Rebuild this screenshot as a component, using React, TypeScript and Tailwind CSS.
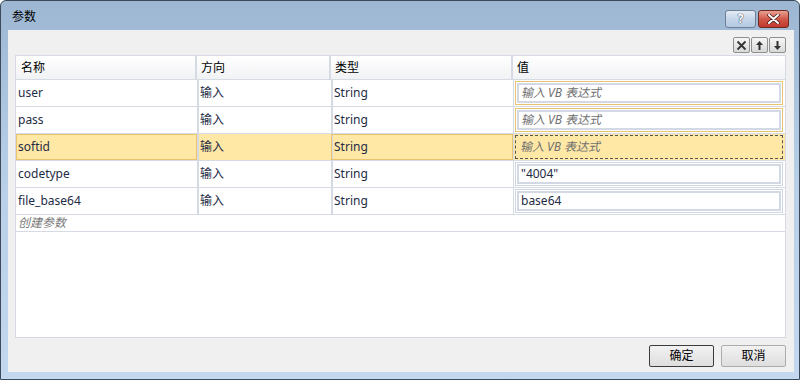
import React from "react";

type Param = { name: string; dir: string; type: string; value: string; placeholder?: boolean };

const params: Param[] = [
	{ name: "user", dir: "输入", type: "String", value: "输入 VB 表达式", placeholder: true },
	{ name: "pass", dir: "输入", type: "String", value: "输入 VB 表达式", placeholder: true },
	{ name: "softid", dir: "输入", type: "String", value: "输入 VB 表达式", placeholder: true },
	{ name: "codetype", dir: "输入", type: "String", value: "\"4004\"" },
	{ name: "file_base64", dir: "输入", type: "String", value: "base64" },
];

const font = { fontFamily: '"Noto Sans", "Noto Sans CJK SC", sans-serif' };

function ToolButton({ children }: { children: React.ReactNode }) {
	return (
		<div className="w-[17px] h-[16px] flex items-center justify-center rounded-[2px] border border-[#8e8f8f] bg-gradient-to-b from-[#f6f6f6] to-[#d9d9d9] text-[#222]">
			{children}
		</div>
	);
}

export default function App() {
	return (
		<div className="w-[800px] h-[380px] overflow-hidden" style={font}>
			<div className="w-[800px] h-[380px] flex flex-col rounded-t-[6px] border border-[#3c4a5c] bg-gradient-to-b from-[#9db7d3] via-[#b9d0e8] to-[#c3d8ee]">
				{/* title bar */}
				<div className="h-[29px] flex items-start">
					<span className="mt-[8px] ml-[11px] text-[12px] leading-[16px] text-black">参数</span>
					<div className="ml-auto mt-[9px] mr-[10px] flex gap-[2px]">
						<div className="w-[31px] h-[18px] rounded-[3px] border border-[#6e7f96] bg-gradient-to-b from-[#e4ecf6] via-[#c6d6ea] to-[#b3c8e2] flex items-center justify-center text-[12px] font-bold text-white [text-shadow:0_0_1px_#334,0_0_1px_#334]">
							?
						</div>
						<div className="w-[31px] h-[18px] rounded-[3px] border border-[#6b2a24] bg-gradient-to-b from-[#e8a193] via-[#d0574a] to-[#c0392b] flex items-center justify-center">
							<svg width="13" height="10" viewBox="0 0 13 10">
								<path d="M2 1 L11 9 M11 1 L2 9" stroke="#3a1a16" strokeWidth="3.4" strokeLinecap="round" />
								<path d="M2 1 L11 9 M11 1 L2 9" stroke="#fff" strokeWidth="2" strokeLinecap="round" />
							</svg>
						</div>
					</div>
				</div>

				{/* client area */}
				<div className="ml-[7px] mr-[5px] h-[342px] bg-[#f0f0f0] flex flex-col pl-[7px] pr-[8px]">
					<div className="h-[25px] flex items-start justify-end pt-[7px]">
						<div className="flex gap-[1px]">
							<ToolButton>
								<svg width="11" height="11" viewBox="0 0 11 11">
									<path d="M1.5 1.5 L9.5 9.5 M9.5 1.5 L1.5 9.5" stroke="#333" strokeWidth="1.8" />
								</svg>
							</ToolButton>
							<ToolButton>
								<svg width="9" height="11" viewBox="0 0 9 11">
									<path d="M4.5 1 L8 5 H5.5 V10 H3.5 V5 H1 Z" fill="#333" />
								</svg>
							</ToolButton>
							<ToolButton>
								<svg width="9" height="11" viewBox="0 0 9 11">
									<path d="M4.5 10 L8 6 H5.5 V1 H3.5 V6 H1 Z" fill="#333" />
								</svg>
							</ToolButton>
						</div>
					</div>

					{/* grid */}
					<div className="h-[283px] border border-[#d5dae3] bg-white flex flex-col text-[12px] leading-[16px]">
						<div className="h-[24px] flex bg-gradient-to-b from-white to-[#f1f2f4] border-b border-[#d5dae3] text-black">
							<div className="w-[181px] border-r-2 border-[#d5dae3] pl-[5px] pt-[4px]">名称</div>
							<div className="w-[134px] border-r-2 border-[#d5dae3] pl-[4px] pt-[4px]">方向</div>
							<div className="w-[182px] border-r-2 border-[#d5dae3] pl-[4px] pt-[4px]">类型</div>
							<div className="flex-1 pl-[4px] pt-[4px]">值</div>
						</div>
						{params.map((p, i) => {
							const selected = i === 2;
							const hot = i < 2;
							return (
								<div
									key={p.name}
									className={
										selected
											? "h-[27px] flex border-b border-[#d5dae3] bg-[#ffe8a6] text-[#1e2b45]"
											: "h-[27px] flex border-b border-[#d5dae3] text-[#1e2b45]"
									}
								>
									<div
										className={
											selected
												? "w-[181px] border border-[#eac46c] pl-[1px] flex items-center"
												: "w-[181px] pl-[2px] flex items-center"
										}
									>
										{p.name}
									</div>
									<div className="w-[134px] border-l-2 border-[#d5dae3] pl-[1px] flex items-center">{p.dir}</div>
									<div
										className={
											selected
												? "w-[182px] border-l-2 border-[#d5dae3] pl-[1px] flex items-center outline outline-1 outline-[#eac46c] -outline-offset-1"
												: "w-[182px] border-l-2 border-[#d5dae3] pl-[1px] flex items-center"
										}
									>
										{p.type}
									</div>
									<div className="flex-1 border-l border-[#d5dae3] p-[1px] pr-[2px]">
										{selected ? (
											<div className="h-full border border-dashed border-[#555] flex items-center pl-[4px] text-[#707070] italic">
												{p.value}
											</div>
										) : (
											<div
												className={
													hot
														? "h-full border border-[#e8c46f] p-[1px]"
														: "h-full border border-[#d0d6e2] p-[1px]"
												}
											>
												<div
													className={
														p.placeholder
															? "h-full border-2 border-[#d3d9e4] bg-white flex items-center pl-[2px] text-[#6f6f6f] italic"
															: "h-full border-2 border-[#d3d9e4] bg-white flex items-center pl-[2px] text-[#1e2b45]"
													}
												>
													{p.value}
												</div>
											</div>
										)}
									</div>
								</div>
							);
						})}
						<div className="h-[17px] flex items-center border-b border-[#d5dae3] pl-[2px] text-[#7a7a7a] italic">创建参数</div>
					</div>

					{/* buttons */}
					<div className="flex justify-end gap-[7px] mt-[7px]">
						<div className="w-[65px] h-[22px] border border-[#3c3c3c] rounded-[2px] bg-gradient-to-b from-[#f2f2f2] to-[#dedede] flex items-center justify-center text-[12px] text-black">
							确定
						</div>
						<div className="w-[65px] h-[22px] border border-[#acacac] rounded-[2px] bg-gradient-to-b from-[#f2f2f2] to-[#dedede] flex items-center justify-center text-[12px] text-black">
							取消
						</div>
					</div>
				</div>
			</div>
		</div>
	);
}
